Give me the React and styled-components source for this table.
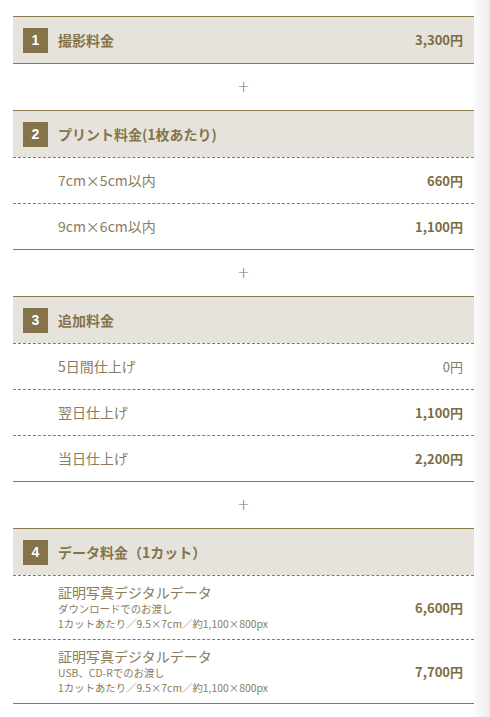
import React from 'react';
import styled, { createGlobalStyle } from 'styled-components';

const GlobalStyle = createGlobalStyle`
  html, body {
    margin: 0;
    padding: 0;
    background: #fff;
  }
  body {
    font-family: "Noto Sans CJK JP", "Noto Sans", sans-serif;
    color: #8a7c5c;
  }
`;

const sections = [
  {
    no: 1,
    title: '撮影料金',
    price: '3,300円',
    rows: []
  },
  {
    no: 2,
    title: 'プリント料金(1枚あたり)',
    rows: [
      { label: '7cm×5cm以内', price: '660円' },
      { label: '9cm×6cm以内', price: '1,100円' }
    ]
  },
  {
    no: 3,
    title: '追加料金',
    rows: [
      { label: '5日間仕上げ', price: '0円', light: true },
      { label: '翌日仕上げ', price: '1,100円' },
      { label: '当日仕上げ', price: '2,200円' }
    ]
  },
  {
    no: 4,
    title: 'データ料金（1カット）',
    rows: [
      {
        label: '証明写真デジタルデータ',
        notes: ['ダウンロードでのお渡し', '1カットあたり／9.5×7cm／約1,100×800px'],
        price: '6,600円'
      },
      {
        label: '証明写真デジタルデータ',
        notes: ['USB、CD-Rでのお渡し', '1カットあたり／9.5×7cm／約1,100×800px'],
        price: '7,700円'
      }
    ]
  }
];

export default function App() {
  return (
    <Shell>
      <GlobalStyle />
      <Main>
        {sections.map((s, i) => (
          <React.Fragment key={s.no}>
            {i > 0 && <Plus>+</Plus>}
            <Block>
              <Head>
                <Badge>{s.no}</Badge>
                <HeadTitle>{s.title}</HeadTitle>
                {s.price && <Price>{s.price}</Price>}
              </Head>
              {s.rows.map((r, j) => (
                <Row key={j} tall={!!r.notes}>
                  <Label>
                    <LabelMain>{r.label}</LabelMain>
                    {r.notes && r.notes.map((n, k) => <Note key={k}>{n}</Note>)}
                  </Label>
                  <Price light={r.light}>{r.price}</Price>
                </Row>
              ))}
            </Block>
          </React.Fragment>
        ))}
      </Main>
      <Shade />
    </Shell>
  );
}

const Shell = styled.div`
  display: flex;
  min-height: 717px;
`;

const Main = styled.div`
  width: 461px;
  padding: 16px 0 20px 13px;
`;

const Shade = styled.aside`
  flex: 1;
  background: linear-gradient(to right, #fbfbfb, #ececec);
`;

const Block = styled.section`
  border-top: 1px solid #8a7a4c;
  border-bottom: 1px solid #8a7a4c;
`;

const Head = styled.div`
  display: flex;
  align-items: center;
  height: 46px;
  padding: 0 11px 1px 10px;
  box-sizing: border-box;
  background: #e6e3dc;
`;

const Badge = styled.span`
  display: flex;
  align-items: center;
  justify-content: center;
  width: 25px;
  height: 25px;
  margin: 1px 10px 0 0;
  background: #857449;
  color: #fff;
  font-family: "Liberation Sans", Arial, sans-serif;
  font-weight: bold;
  font-size: 14px;
`;

const HeadTitle = styled.span`
  flex: 1;
  font-size: 14px;
  font-weight: bold;
  color: #857449;
`;

const Price = styled.span`
  font-size: 13px;
  font-weight: ${p => (p.light ? 'normal' : 'bold')};
  color: ${p => (p.light ? '#8a7c5c' : '#7d6c42')};
  white-space: nowrap;
`;

const Row = styled.div`
  display: flex;
  align-items: center;
  height: ${p => (p.tall ? '64px' : '46px')};
  padding: 0 11px 1px 45px;
  box-sizing: border-box;
  border-top: 1px dashed #8a7a4c;
`;

const Label = styled.div`
  flex: 1;
  display: flex;
  flex-direction: column;
`;

const LabelMain = styled.span`
  font-size: 14px;
  line-height: 17px;
  color: #8a7c5c;
`;

const Note = styled.span`
  font-size: 10.4px;
  line-height: 15px;
  color: #8a7c5c;
`;

const Plus = styled.div`
  display: flex;
  align-items: center;
  justify-content: center;
  height: 46px;
  padding-bottom: 1px;
  box-sizing: border-box;
  font-family: "DejaVu Sans", sans-serif;
  font-size: 15px;
  font-weight: 300;
  color: #7a7362;
`;
